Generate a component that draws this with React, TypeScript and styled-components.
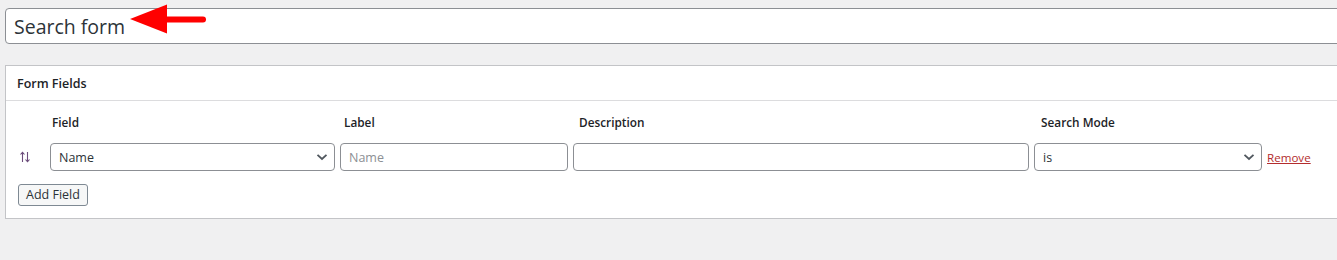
import React from "react";
import styled, { createGlobalStyle } from "styled-components";

const Global = createGlobalStyle`
  html, body { margin: 0; padding: 0; background: #f0f0f1; overflow: hidden; }
  body { font-family: "Open Sans", "Noto Sans", sans-serif; color: #1d2327; }
`;

const Page = styled.div`
  width: 1360px;
  padding: 8px 0 0 5px;
  display: flex;
  flex-direction: column;
  gap: 21px;
`;

const TitleWrap = styled.div`
  position: relative;
`;

const TitleInput = styled.input`
  box-sizing: border-box;
  width: 100%;
  height: 36px;
  margin: 0;
  border: 1px solid #8c8f94;
  border-radius: 4px;
  background: #fff;
  padding: 0 8px;
  font-family: "Open Sans", "Noto Sans", sans-serif;
  font-size: 19.5px;
  color: #2c3338;
  outline: none;
`;

const Arrow = styled.svg`
  position: absolute;
  left: 120px;
  top: -4px;
`;

const Panel = styled.section`
  box-sizing: border-box;
  width: 100%;
  background: #fff;
  border: 1px solid #c3c4c7;
`;

const PanelHeader = styled.div`
  height: 34px;
  border-bottom: 1px solid #dcdcde;
  display: flex;
  align-items: center;
  padding-left: 11px;
  font-size: 12.5px;
  font-weight: 600;
  color: #1d2327;
`;

const PanelBody = styled.div`
  padding: 11px 0 12px 7px;
  display: flex;
  flex-direction: column;
  align-items: flex-start;
`;

const Grid = styled.div`
  display: grid;
  grid-template-columns: 32px 285px 228px 456px 228px auto;
  column-gap: 5px;
  row-gap: 11px;
  align-items: center;
`;

const ColHead = styled.div<{ $indent: number }>`
  padding-left: ${(p) => p.$indent}px;
  font-size: 11.8px;
  font-weight: 600;
  color: #1d2327;
  line-height: 20px;
`;

const SortCell = styled.div`
  display: flex;
  align-items: center;
  padding-left: 6px;
`;

const SelectBox = styled.div`
  box-sizing: border-box;
  height: 28px;
  border: 1px solid #8c8f94;
  border-radius: 4px;
  background: #fff;
  display: flex;
  align-items: center;
  justify-content: space-between;
  padding: 0 6px 0 8px;
  font-size: 12.5px;
  color: #2c3338;
`;

const TextInput = styled.input`
  box-sizing: border-box;
  width: 100%;
  height: 28px;
  margin: 0;
  border: 1px solid #8c8f94;
  border-radius: 4px;
  background: #fff;
  padding: 0 8px;
  font-family: "Open Sans", "Noto Sans", sans-serif;
  font-size: 12.5px;
  color: #2c3338;
  outline: none;
  &::placeholder { color: #8c8f94; }
`;

const RemoveLink = styled.a`
  font-size: 11.6px;
  color: #b32d2e;
  text-decoration: underline;
  cursor: pointer;
`;

const Button = styled.button`
  margin-top: 13px;
  margin-left: 5px;
  box-sizing: border-box;
  height: 22px;
  padding: 0 7px;
  border: 1px solid #7e8993;
  border-radius: 3px;
  background: #f6f7f7;
  font-family: "Open Sans", "Noto Sans", sans-serif;
  font-size: 12.5px;
  color: #2c3338;
  line-height: 20px;
`;

const Chevron = () => (
  <svg width="12" height="8" viewBox="0 0 12 8">
    <path d="M1.5 1.8 L6 6 L10.5 1.8" fill="none" stroke="#50575e" strokeWidth="1.8" />
  </svg>
);

const SortIcon = () => (
  <svg width="12" height="12" viewBox="0 0 12 12">
    <g fill="none" stroke="#6c4d7b" strokeWidth="1.1">
      <path d="M3.5 11 V1.5" />
      <path d="M1.5 3.5 L3.5 1.3 L5.5 3.5" />
      <path d="M8.5 1 V10.5" />
      <path d="M6.5 8.5 L8.5 10.7 L10.5 8.5" />
    </g>
  </svg>
);

export default function App() {
  return (
    <>
      <Global />
      <Page>
        <TitleWrap>
          <TitleInput defaultValue="Search form" />
          <Arrow width="86" height="32" viewBox="0 0 86 32">
            <polygon points="5,15 42,0.5 42,29.5" fill="#ff0000" />
            <line x1="39" y1="15.5" x2="78" y2="15.5" stroke="#ff0000" strokeWidth="6" strokeLinecap="round" />
          </Arrow>
        </TitleWrap>
        <Panel>
          <PanelHeader>Form Fields</PanelHeader>
          <PanelBody>
            <Grid>
              <div />
              <ColHead $indent={2}>Field</ColHead>
              <ColHead $indent={4}>Label</ColHead>
              <ColHead $indent={6}>Description</ColHead>
              <ColHead $indent={7}>Search Mode</ColHead>
              <div />

              <SortCell><SortIcon /></SortCell>
              <SelectBox>
                <span>Name</span>
                <Chevron />
              </SelectBox>
              <TextInput placeholder="Name" />
              <TextInput />
              <SelectBox>
                <span>is</span>
                <Chevron />
              </SelectBox>
              <RemoveLink>Remove</RemoveLink>
            </Grid>
            <Button>Add Field</Button>
          </PanelBody>
        </Panel>
      </Page>
    </>
  );
}
